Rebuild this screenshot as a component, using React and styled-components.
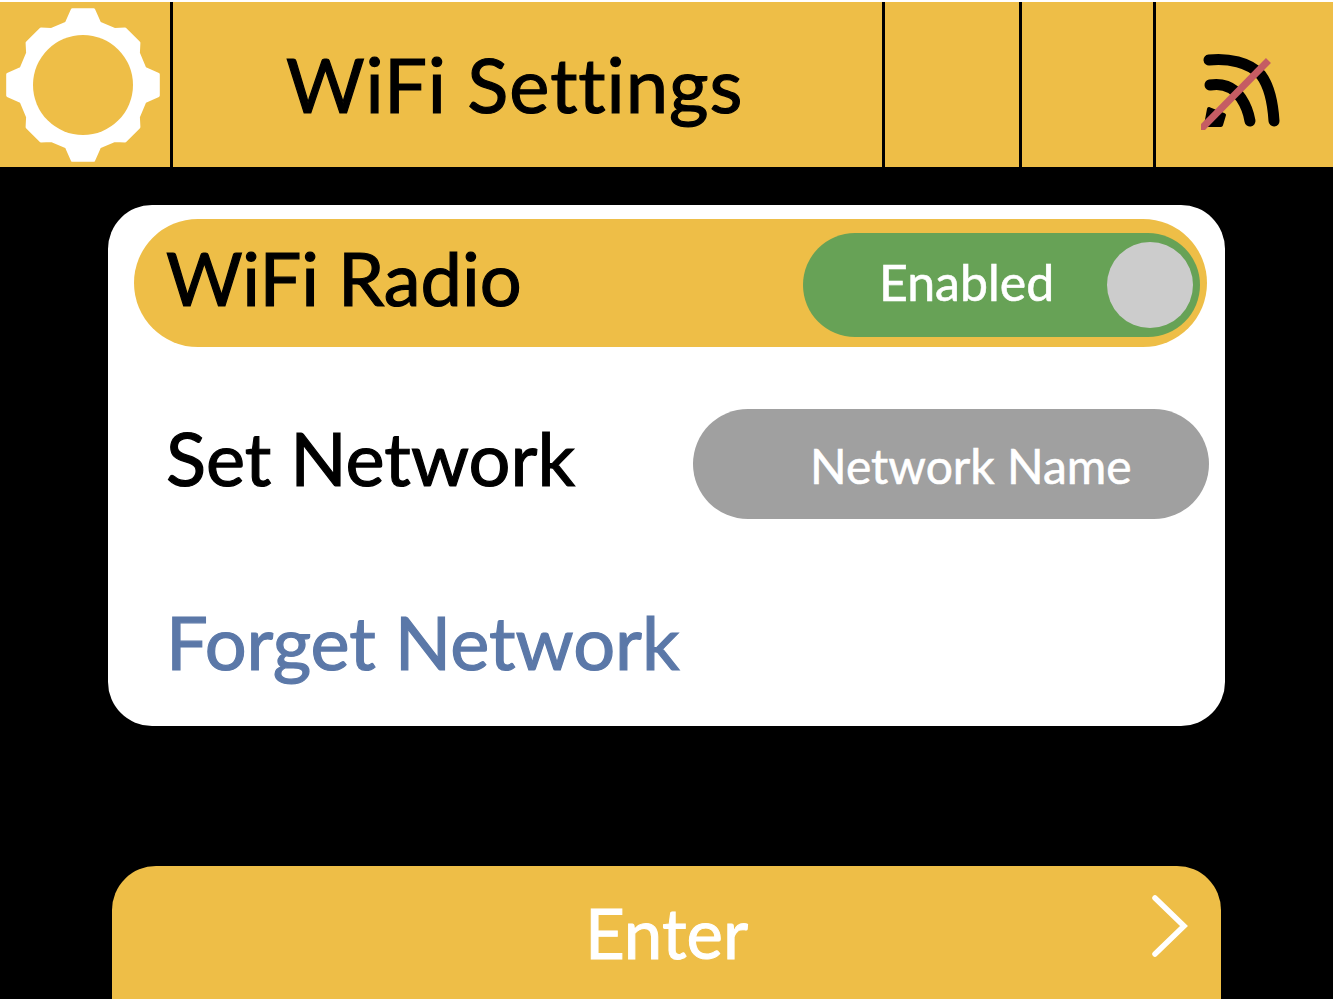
import * as React from "react"
import styled, { createGlobalStyle } from "styled-components"

const Global = createGlobalStyle`
  html, body {
    margin: 0;
    background: #ffffff;
  }
`

// 8 teeth around the ring, the straight ones stick out further than the diagonals
const gearPath = () => {
  const cx = 83
  const cy = 82
  const pt = (r, deg) => {
    const a = (deg * Math.PI) / 180
    return `${(cx + r * Math.cos(a)).toFixed(1)} ${(cy + r * Math.sin(a)).toFixed(1)}`
  }
  const parts = []
  for (let i = 0; i < 8; i++) {
    const mid = i * 45
    const tip = i % 2 === 0 ? 76 : 70
    parts.push(pt(64, mid - 15), pt(tip, mid - 8), pt(tip, mid + 8), pt(64, mid + 15))
  }
  return "M" + parts.join(" L") + " Z"
}

const GearIcon = () => (
  <svg width="166" height="164" viewBox="0 0 166 164">
    <defs>
      <filter id="gearSoft">
        <feGaussianBlur stdDeviation="0.7" />
      </filter>
    </defs>
    <g filter="url(#gearSoft)">
      <path fill="#ffffff" stroke="#ffffff" strokeWidth="3" strokeLinejoin="round" d={gearPath()} />
      <circle cx="83" cy="82" r="50" fill="#eebe47" />
    </g>
  </svg>
)

const WifiOffIcon = () => (
  <svg width="84" height="90" viewBox="0 0 84 90" fill="none">
    <defs>
      <filter id="wifiSoft">
        <feGaussianBlur stdDeviation="0.7" />
      </filter>
    </defs>
    <g filter="url(#wifiSoft)">
      <g stroke="#000000" strokeWidth="11" strokeLinecap="round">
        <path d="M8 20 C27 18 48 22 60 35 C69 47 72 65 73 81" />
        <path d="M9 45 C20 43 32 46 40 58 C46 67 48 75 49 81" />
      </g>
      <path d="M8 69 L23 75 L20 85 L5 85 Z" fill="#000000" stroke="#000000" strokeWidth="4" strokeLinejoin="round" />
      <path d="M2 87 L65 23" stroke="#c55c63" strokeWidth="7" strokeLinecap="square" />
    </g>
  </svg>
)

const ChevronIcon = () => (
  <svg width="36" height="62" viewBox="0 0 36 62" fill="none">
    <path
      d="M3 3 L32 31 L3 59"
      stroke="#ffffff"
      strokeWidth="5.5"
      strokeLinecap="round"
      strokeLinejoin="miter"
    />
  </svg>
)

const App = () => (
  <>
    <Global />
    <Screen>
      <Header>
        <GearCell>
          <GearIcon />
        </GearCell>
        <TitleCell>
          <HeaderTitle>WiFi Settings</HeaderTitle>
        </TitleCell>
        <EmptyCell $width="137px" />
        <EmptyCell $width="134px" />
        <StatusCell>
          <WifiOffIcon />
        </StatusCell>
      </Header>
      <Content>
        <Card>
          <RadioRow>
            <RowLabel $lift="10px">WiFi Radio</RowLabel>
            <Toggle>
              <ToggleText>Enabled</ToggleText>
              <Knob />
            </Toggle>
          </RadioRow>
          <NetworkRow>
            <RowLabel $lift="12px">Set Network</RowLabel>
            <NamePill>Network Name</NamePill>
          </NetworkRow>
          <ForgetRow>
            <RowLabel $lift="2px" $color="#5b78a8">
              Forget Network
            </RowLabel>
          </ForgetRow>
        </Card>
        <EnterButton>
          <EnterText>Enter</EnterText>
          <ChevronSlot>
            <ChevronIcon />
          </ChevronSlot>
        </EnterButton>
      </Content>
    </Screen>
  </>
)

export default App

const Screen = styled.div`
  width: 1333px;
  height: 997px;
  margin-top: 2px;
  background-color: #000000;
  font-family: "Lato", "Liberation Sans", sans-serif;
  overflow: hidden;
`

const Header = styled.div`
  display: flex;
  height: 165px;
  background-color: #eebe47;
`

const GearCell = styled.div`
  flex-shrink: 0;
  box-sizing: border-box;
  width: 173px;
  display: flex;
  align-items: center;
  border-right: 3px solid #000000;
`

const TitleCell = styled.div`
  flex-shrink: 0;
  box-sizing: border-box;
  width: 712px;
  padding-left: 113px;
  display: flex;
  align-items: center;
  border-right: 3px solid #000000;
`

const HeaderTitle = styled.h1`
  margin: 0 0 2px;
  font-size: 76px;
  line-height: 1;
  font-weight: 400;
  letter-spacing: 0.95px;
  -webkit-text-stroke: 1.2px #000000;
  color: #000000;
`

const EmptyCell = styled.div`
  width: ${(p) => p.$width};
  flex-shrink: 0;
  box-sizing: border-box;
  border-right: 3px solid #000000;
`

const StatusCell = styled.div`
  flex: 1;
  display: flex;
  align-items: center;
  justify-content: center;
  padding-right: 4px;
`

const Content = styled.div`
  display: flex;
  flex-direction: column;
  align-items: flex-start;
  padding: 38px 0 0 108px;
`

const Card = styled.div`
  box-sizing: border-box;
  width: 1117px;
  height: 521px;
  padding: 14px 18px 0 26px;
  background-color: #ffffff;
  border-radius: 44px;
`

const RadioRow = styled.div`
  display: flex;
  align-items: center;
  justify-content: space-between;
  box-sizing: border-box;
  height: 128px;
  padding: 0 7px 0 32px;
  background-color: #eebe47;
  border-radius: 64px;
`

const RowLabel = styled.span`
  margin-bottom: ${(p) => p.$lift || 0};
  font-size: 74px;
  line-height: 1;
  font-weight: 400;
  -webkit-text-stroke: 1.2px ${(p) => p.$color || "#000000"};
  color: ${(p) => p.$color || "#000000"};
`

const Toggle = styled.div`
  display: flex;
  align-items: center;
  justify-content: space-between;
  box-sizing: border-box;
  width: 397px;
  height: 104px;
  margin-top: 4px;
  padding: 0 7px 0 76px;
  background-color: #67a256;
  border-radius: 52px;
`

const ToggleText = styled.span`
  margin-bottom: 6px;
  font-size: 50px;
  font-weight: 400;
  -webkit-text-stroke: 0.6px #ffffff;
  color: #ffffff;
`

const Knob = styled.div`
  width: 86px;
  height: 86px;
  border-radius: 50%;
  background-color: #cccccc;
`

const NetworkRow = styled.div`
  display: flex;
  align-items: center;
  justify-content: space-between;
  box-sizing: border-box;
  height: 110px;
  margin: 62px -2px 0 0;
  padding: 0 0 0 32px;
`

const NamePill = styled.div`
  display: flex;
  align-items: center;
  box-sizing: border-box;
  width: 516px;
  height: 110px;
  padding: 2px 0 0 117px;
  background-color: #a0a0a0;
  border-radius: 55px;
  font-size: 48px;
  font-weight: 400;
  -webkit-text-stroke: 0.6px #ffffff;
  color: #ffffff;
`

const ForgetRow = styled.div`
  display: flex;
  align-items: center;
  height: 100px;
  margin-top: 74px;
  padding-left: 32px;
`

const EnterButton = styled.div`
  display: flex;
  align-items: center;
  box-sizing: border-box;
  position: relative;
  width: 1109px;
  height: 133px;
  margin: 140px 0 0 4px;
  background-color: #eebe47;
  border-radius: 44px 44px 0 0;
`

const EnterText = styled.div`
  width: 100%;
  text-align: center;
  font-size: 69px;
  font-weight: 400;
  -webkit-text-stroke: 1px #ffffff;
  color: #ffffff;
`

const ChevronSlot = styled.div`
  position: absolute;
  right: 33px;
  top: 29px;
  display: flex;
`
